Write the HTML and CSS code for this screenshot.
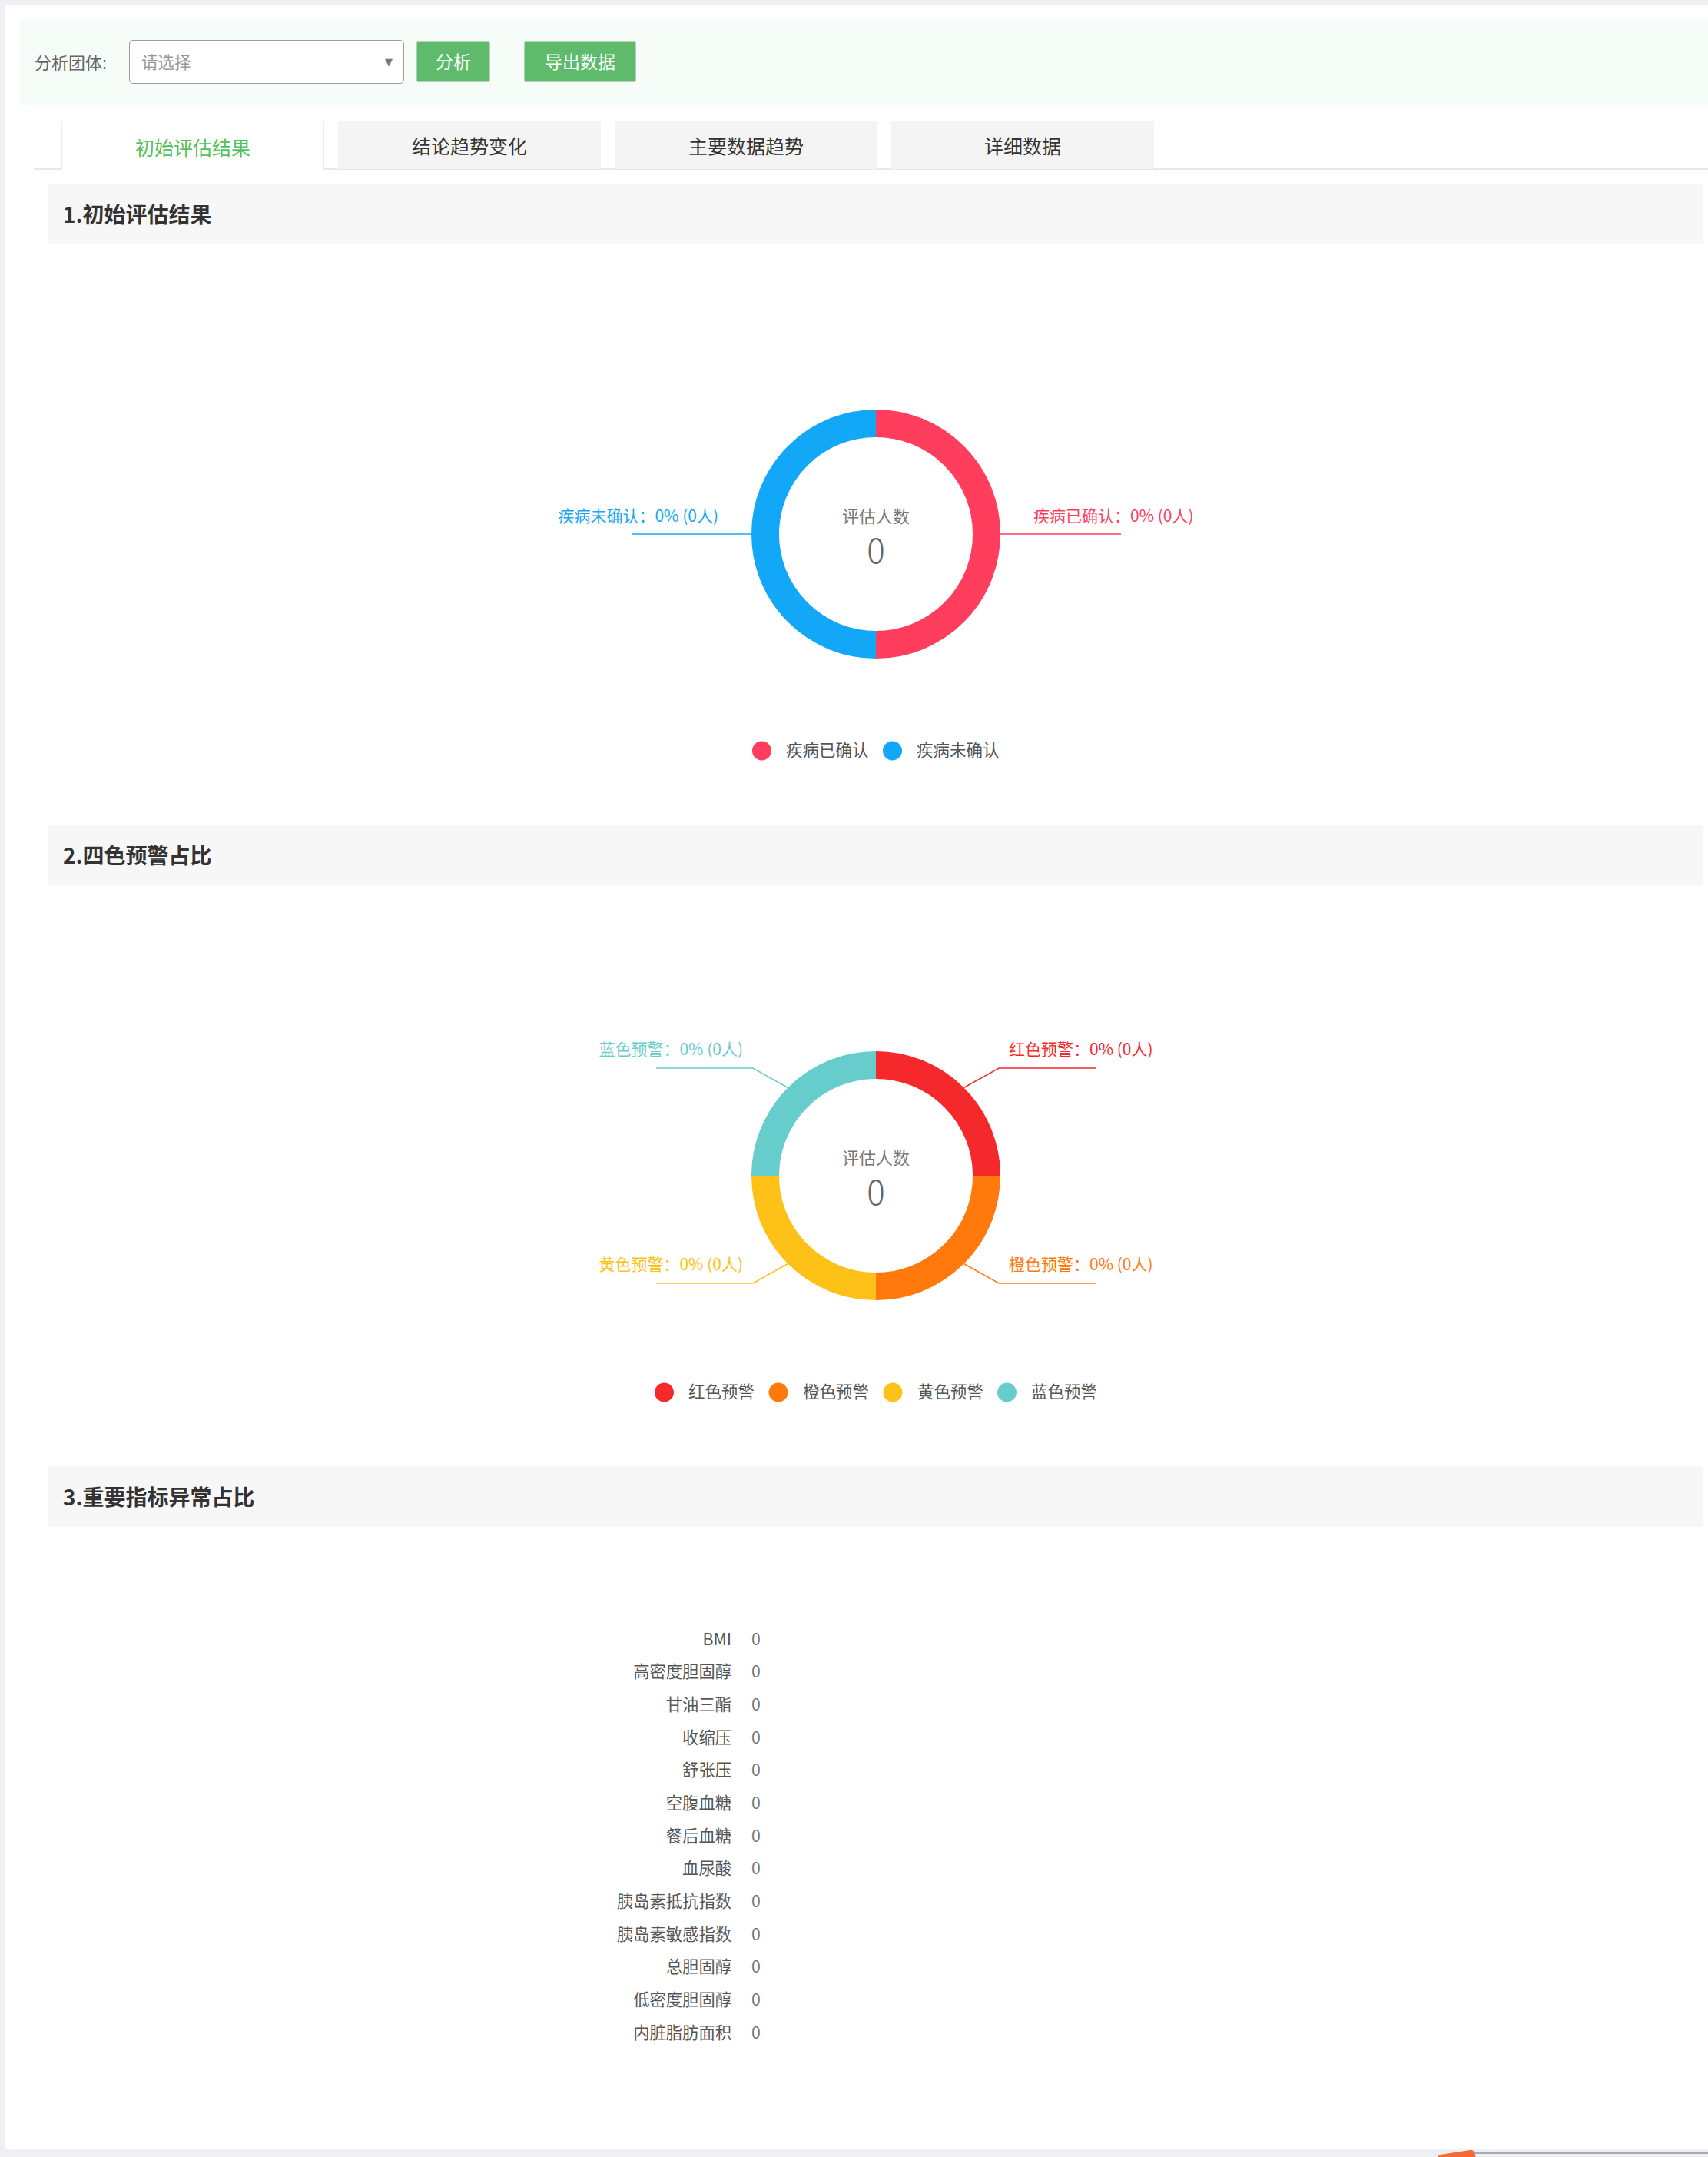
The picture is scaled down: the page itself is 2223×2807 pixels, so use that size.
FILE: index.html
```html
<!DOCTYPE html>
<html lang="zh-CN">
<head>
<meta charset="utf-8">
<title>分析</title>
<link rel="stylesheet" href="styles.css">
</head>
<body>
<div class="page">
  <div class="panel">
    <div class="filter-bar">
      <span class="filter-label">分析团体:</span>
      <div class="select">
        <span class="select-placeholder">请选择</span>
        <span class="select-arrow">▼</span>
      </div>
      <button class="btn btn-analyze">分析</button>
      <button class="btn btn-export">导出数据</button>
    </div>

    <div class="tabs">
      <div class="tab tab-active">初始评估结果</div>
      <div class="tab">结论趋势变化</div>
      <div class="tab">主要数据趋势</div>
      <div class="tab">详细数据</div>
    </div>

    <div class="section">
      <div class="section-title">1.初始评估结果</div>
      <div class="chart chart-pie">
        <svg class="chart-svg" width="2154" height="755" viewBox="0 0 2154 755">
          <path d="M 1077 233 A 144 144 0 0 1 1077 521" class="seg" stroke="#ff3d5d"/>
          <path d="M 1077 521 A 144 144 0 0 1 1077 233" class="seg" stroke="#12a8f7"/>
          <line x1="760" y1="377" x2="916" y2="377" stroke="#12a8f7" stroke-width="1.6"/>
          <line x1="1238" y1="377" x2="1396" y2="377" stroke="#ff3d5d" stroke-width="1.6"/>
          <text x="872" y="352" class="lbl" text-anchor="end" fill="#12a8f7">疾病未确认：0% (0人)</text>
          <text x="1282" y="352" class="lbl" fill="#ff3d5d">疾病已确认：0% (0人)</text>
          <text x="1077" y="352" class="center-title" text-anchor="middle">评估人数</text>
          <text x="1077" y="396" class="center-value" text-anchor="middle">0</text>
          <circle cx="928.5" cy="659" r="12.5" fill="#ff3d5d"/>
          <text x="960" y="656" class="legend-text">疾病已确认</text>
          <circle cx="1098.5" cy="659" r="12.5" fill="#12a8f7"/>
          <text x="1130" y="656" class="legend-text">疾病未确认</text>
        </svg>
      </div>

      <div class="section-title">2.四色预警占比</div>
      <div class="chart chart-pie chart-pie-2">
        <svg class="chart-svg" width="2154" height="756" viewBox="0 0 2154 756">
          <path d="M 1077 234 A 144 144 0 0 1 1221 378" class="seg" stroke="#f5282b"/>
          <path d="M 1221 378 A 144 144 0 0 1 1077 522" class="seg" stroke="#ff790d"/>
          <path d="M 1077 522 A 144 144 0 0 1 933 378" class="seg" stroke="#fdc118"/>
          <path d="M 933 378 A 144 144 0 0 1 1077 234" class="seg" stroke="#66cccc"/>
          <polyline points="791,238 917,238 962.5,263.5" class="lead" stroke="#66cccc"/>
          <polyline points="1191.5,263.5 1237,238 1364,238" class="lead" stroke="#f5282b"/>
          <polyline points="962.5,492.5 917,518 791,518" class="lead" stroke="#fdc118"/>
          <polyline points="1191.5,492.5 1237,518 1364,518" class="lead" stroke="#ff790d"/>
          <text x="904" y="212" class="lbl" text-anchor="end" fill="#66cccc">蓝色预警：0% (0人)</text>
          <text x="1250" y="212" class="lbl" fill="#f5282b">红色预警：0% (0人)</text>
          <text x="904" y="492" class="lbl" text-anchor="end" fill="#fdc118">黄色预警：0% (0人)</text>
          <text x="1250" y="492" class="lbl" fill="#ff790d">橙色预警：0% (0人)</text>
          <text x="1077" y="353" class="center-title" text-anchor="middle">评估人数</text>
          <text x="1077" y="397" class="center-value" text-anchor="middle">0</text>
          <circle cx="801.5" cy="660" r="12.5" fill="#f5282b"/>
          <text x="833" y="657" class="legend-text">红色预警</text>
          <circle cx="950" cy="660" r="12.5" fill="#ff790d"/>
          <text x="982" y="657" class="legend-text">橙色预警</text>
          <circle cx="1099" cy="660" r="12.5" fill="#fdc118"/>
          <text x="1131" y="657" class="legend-text">黄色预警</text>
          <circle cx="1247.5" cy="660" r="12.5" fill="#66cccc"/>
          <text x="1279" y="657" class="legend-text">蓝色预警</text>
        </svg>
      </div>

      <div class="section-title">3.重要指标异常占比</div>
      <div class="chart chart-bars">
        <div class="bar-row"><span class="bar-label">BMI</span><span class="bar-value">0</span></div>
        <div class="bar-row"><span class="bar-label">高密度胆固醇</span><span class="bar-value">0</span></div>
        <div class="bar-row"><span class="bar-label">甘油三酯</span><span class="bar-value">0</span></div>
        <div class="bar-row"><span class="bar-label">收缩压</span><span class="bar-value">0</span></div>
        <div class="bar-row"><span class="bar-label">舒张压</span><span class="bar-value">0</span></div>
        <div class="bar-row"><span class="bar-label">空腹血糖</span><span class="bar-value">0</span></div>
        <div class="bar-row"><span class="bar-label">餐后血糖</span><span class="bar-value">0</span></div>
        <div class="bar-row"><span class="bar-label">血尿酸</span><span class="bar-value">0</span></div>
        <div class="bar-row"><span class="bar-label">胰岛素抵抗指数</span><span class="bar-value">0</span></div>
        <div class="bar-row"><span class="bar-label">胰岛素敏感指数</span><span class="bar-value">0</span></div>
        <div class="bar-row"><span class="bar-label">总胆固醇</span><span class="bar-value">0</span></div>
        <div class="bar-row"><span class="bar-label">低密度胆固醇</span><span class="bar-value">0</span></div>
        <div class="bar-row"><span class="bar-label">内脏脂肪面积</span><span class="bar-value">0</span></div>
      </div>
    </div>
  </div>
  <div class="corner-tag"></div>
  <div class="corner-line"></div>
</div>
</body>
</html>
```

FILE: styles.css
```css
* {
  box-sizing: border-box;
}

html, body {
  margin: 0;
  padding: 0;
}

body {
  background: #eff0f4;
  font-family: "Noto Sans CJK SC", "Noto Sans", "Liberation Sans", sans-serif;
  color: #333;
  overflow: hidden;
}

.page {
  position: relative;
  width: 2223px;
  height: 2807px;
  padding: 7px 0 0 7px;
}

.panel {
  background: #fff;
  height: 2790px;
  width: 2216px;
  padding-top: 18px;
}

/* filter bar */
.filter-bar {
  margin-left: 19px;
  height: 112px;
  background: #f6fdf8;
  border-bottom: 1px solid #edf1ee;
  display: flex;
  align-items: center;
  padding-left: 19px;
}

.filter-label {
  width: 123px;
  font-size: 22px;
  color: #666;
  padding-bottom: 2px;
}

.select {
  width: 358px;
  height: 57px;
  border: 1px solid #9c9c9c;
  border-radius: 5px;
  background: #fff;
  display: flex;
  align-items: center;
  justify-content: space-between;
  padding: 0 14px 3px 15px;
}

.select-placeholder {
  font-size: 21.5px;
  color: #999;
}

.select-arrow {
  font-size: 13px;
  color: #777;
  font-family: "DejaVu Sans", sans-serif;
  padding-top: 3px;
}

.btn {
  height: 53px;
  border: 1px solid #b9cdbc;
  border-radius: 2px;
  background: #5fbb6c;
  color: #fff;
  font-family: "Noto Sans CJK SC", sans-serif;
  font-size: 23px;
  padding: 0 0 3px 0;
  margin: 0;
}

.btn-analyze {
  width: 96px;
  margin-left: 16px;
}

.btn-export {
  width: 146px;
  margin-left: 44px;
}

/* tabs */
.tabs {
  margin: 20px 0 0 37px;
  height: 64px;
  display: flex;
  gap: 18px;
  padding-left: 36px;
  border-bottom: 2px solid #e8e8e8;
}

.tab {
  width: 342px;
  height: 63px;
  background: #f4f4f4;
  font-size: 25px;
  color: #333;
  display: flex;
  align-items: center;
  justify-content: center;
  padding-top: 1px;
}

.tab-active {
  background: #fff;
  color: #55c159;
  border: 1px solid #ececec;
  border-bottom: none;
  height: 64px;
  padding-top: 2px;
}

/* sections */
.section {
  margin: 18px 0 0 56px;
  width: 2154px;
}

.section-title {
  height: 79px;
  line-height: 78px;
  background: #f7f7f7;
  padding-left: 19px;
  font-size: 28px;
  font-weight: 700;
  color: #333;
}

.chart-svg {
  display: block;
}

.seg {
  fill: none;
  stroke-width: 36;
}

.lead {
  fill: none;
  stroke-width: 1.6;
}

.lbl {
  font-size: 21px;
  dominant-baseline: central;
  font-family: "Noto Sans CJK SC", sans-serif;
}

.center-title {
  font-size: 22px;
  fill: #777;
  dominant-baseline: central;
  font-family: "Noto Sans CJK SC", sans-serif;
}

.center-value {
  font-size: 44px;
  fill: #666;
  dominant-baseline: central;
  font-family: "Noto Sans CJK SC", sans-serif;
  font-weight: 300;
}

.legend-text {
  font-size: 21.5px;
  fill: #555;
  dominant-baseline: central;
  font-family: "Noto Sans CJK SC", sans-serif;
}

/* bars */
.chart-bars {
  height: 810px;
  padding-top: 123px;
}

.bar-row {
  height: 42.67px;
  display: flex;
  align-items: center;
}

.bar-label {
  width: 889px;
  text-align: right;
  font-size: 21.3px;
  color: #555;
}

.bar-value {
  margin-left: 26px;
  font-size: 21.3px;
  color: #777;
}

/* decorative cut-off element at the bottom */
.corner-tag {
  position: absolute;
  left: 1871px;
  top: 2797px;
  width: 48px;
  height: 20px;
  background: #f26a36;
  border-radius: 3px 6px 0 0;
  transform: rotate(-9deg);
  transform-origin: right top;
}

.corner-line {
  position: absolute;
  left: 1918px;
  top: 2801px;
  width: 305px;
  height: 2px;
  background: #a9a9b5;
}
```
